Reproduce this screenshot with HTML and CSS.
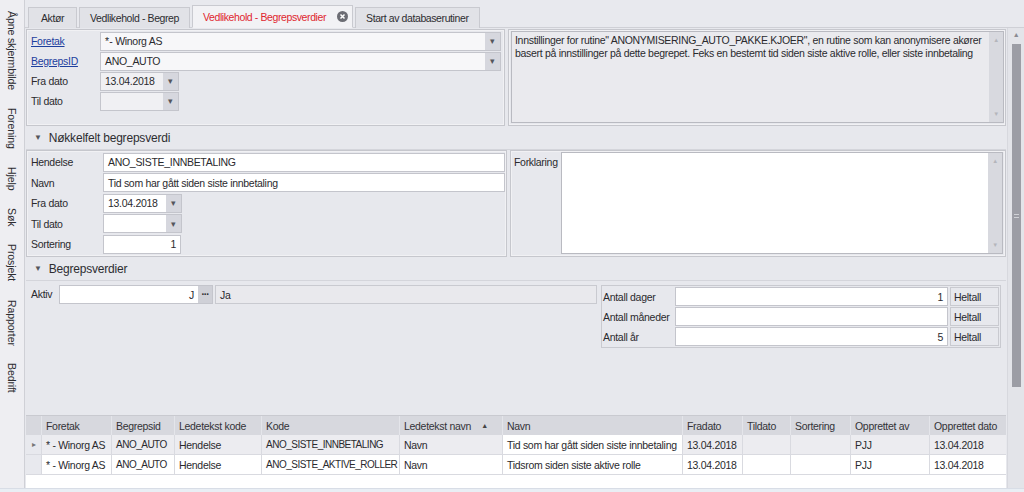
FILE: index.html
```html
<!DOCTYPE html>
<html lang="no">
<head>
<meta charset="utf-8">
<title>Vedlikehold - Begrepsverdier</title>
<link rel="stylesheet" href="styles.css">
</head>
<body>
<div class="app">
  <nav class="sidebar">
    <span class="side-item">Åpne skjermbilde</span>
    <span class="side-item">Forening</span>
    <span class="side-item">Hjelp</span>
    <span class="side-item">Søk</span>
    <span class="side-item">Prosjekt</span>
    <span class="side-item">Rapporter</span>
    <span class="side-item">Bedrift</span>
  </nav>
  <div class="main">
    <div class="tabs">
      <div class="tab first">Aktør</div>
      <div class="tab">Vedlikehold - Begrep</div>
      <div class="tab active">Vedlikehold - Begrepsverdier
        <svg class="close" width="11" height="11" viewBox="0 0 11 11"><circle cx="5.5" cy="5.5" r="5.5" fill="#6c6d74"/><path d="M3.5 3.5l4 4M7.5 3.5l-4 4" stroke="#fff" stroke-width="1.5"/></svg>
      </div>
      <div class="tab">Start av databaserutiner</div>
    </div>
    <div class="workarea">
      <div class="content">
        <div class="row top-row">
          <div class="group form-left">
            <div class="frow"><a class="lbl link" href="#">Foretak</a><div class="input combo w400"><span class="val">*&#8202;- Winorg AS</span><span class="drop">▾</span></div></div>
            <div class="frow"><a class="lbl link" href="#">BegrepsID</a><div class="input combo w400"><span class="val">ANO_AUTO</span><span class="drop">▾</span></div></div>
            <div class="frow"><span class="lbl">Fra dato</span><div class="input combo date gray"><span class="val">13.04.2018</span><span class="drop">▾</span></div></div>
            <div class="frow"><span class="lbl">Til dato</span><div class="input combo date gray"><span class="val"></span><span class="drop">▾</span></div></div>
          </div>
          <div class="group desc">
            <div class="memo gray">
              <div class="memo-text">Innstillinger for rutine" ANONYMISERING_AUTO_PAKKE.KJOER", en rutine som kan anonymisere akører basert på innstillinger på dette begrepet. Feks en bestemt tid siden siste aktive rolle, eller siste innbetaling</div>
              <div class="memo-scroll"><span>▲</span><span>▼</span></div>
            </div>
          </div>
        </div>

        <div class="section"><span class="tri">▼</span>Nøkkelfelt begrepsverdi</div>

        <div class="row key-row">
          <div class="group form-key">
            <div class="krow"><span class="lbl">Hendelse</span><div class="input wide"><span class="val">ANO_SISTE_INNBETALING</span></div></div>
            <div class="krow"><span class="lbl">Navn</span><div class="input wide"><span class="val">Tid som har gått siden siste innbetaling</span></div></div>
            <div class="krow"><span class="lbl">Fra dato</span><div class="input combo date"><span class="val">13.04.2018</span><span class="drop">▾</span></div></div>
            <div class="krow"><span class="lbl">Til dato</span><div class="input combo date"><span class="val"></span><span class="drop">▾</span></div></div>
            <div class="krow"><span class="lbl">Sortering</span><div class="input num"><span class="val">1</span></div></div>
          </div>
          <div class="group forklaring">
            <span class="lbl-top">Forklaring</span>
            <div class="memo white">
              <div class="memo-text"></div>
              <div class="memo-scroll"><span>▲</span><span>▼</span></div>
            </div>
          </div>
        </div>

        <div class="section"><span class="tri">▼</span>Begrepsverdier</div>

        <div class="row values-row">
          <div class="aktiv">
            <span class="lbl small">Aktiv</span>
            <div class="input aktiv-in"><span class="val right">J</span><span class="dots">···</span></div>
            <div class="input ro"><span class="val">Ja</span></div>
          </div>
          <div class="antall">
            <div class="arow"><span class="albl">Antall dager</span><div class="input num flex"><span class="val">1</span></div><span class="type">Heltall</span></div>
            <div class="arow"><span class="albl">Antall måneder</span><div class="input num flex"><span class="val"></span></div><span class="type">Heltall</span></div>
            <div class="arow"><span class="albl">Antall år</span><div class="input num flex"><span class="val">5</span></div><span class="type">Heltall</span></div>
          </div>
        </div>

        <div class="spacer"></div>

        <div class="grid">
          <div class="grow head">
            <span class="c ind"></span><span class="c c1">Foretak</span><span class="c c2">Begrepsid</span><span class="c c3">Ledetekst kode</span><span class="c c4">Kode</span><span class="c c5">Ledetekst navn<span class="sort">▲</span></span><span class="c c6">Navn</span><span class="c c7">Fradato</span><span class="c c8">Tildato</span><span class="c c9">Sortering</span><span class="c c10">Opprettet av</span><span class="c c11">Opprettet dato</span>
          </div>
          <div class="grow sel">
            <span class="c ind"><span class="ptr">▸</span></span><span class="c c1">* - Winorg AS</span><span class="c c2 caps">ANO_AUTO</span><span class="c c3">Hendelse</span><span class="c c4 caps">ANO_SISTE_INNBETALING</span><span class="c c5">Navn</span><span class="c c6 focus">Tid som har gått siden siste innbetaling</span><span class="c c7">13.04.2018</span><span class="c c8"></span><span class="c c9"></span><span class="c c10">PJJ</span><span class="c c11">13.04.2018</span>
          </div>
          <div class="grow">
            <span class="c ind"></span><span class="c c1">* - Winorg AS</span><span class="c c2 caps">ANO_AUTO</span><span class="c c3">Hendelse</span><span class="c c4 caps">ANO_SISTE_AKTIVE_ROLLER</span><span class="c c5">Navn</span><span class="c c6">Tidsrom siden siste aktive rolle</span><span class="c c7">13.04.2018</span><span class="c c8"></span><span class="c c9"></span><span class="c c10">PJJ</span><span class="c c11">13.04.2018</span>
          </div>
        </div>
      </div>
      <div class="vscroll">
        <span class="arrow">▲</span>
        <div class="thumb"><span class="grip"></span></div>
      </div>
    </div>
  </div>
</div>
<div class="statusbar"></div>
</body>
</html>
```
FILE: styles.css
```css
* { box-sizing: border-box; }
html, body { margin: 0; padding: 0; }
body {
  width: 1024px;
  height: 492px;
  overflow: hidden;
  background: #e7e8ed;
  font-family: "Liberation Sans", Arial, sans-serif;
  font-size: 10.5px;
  letter-spacing: -0.3px;
  color: #2a2a2e;
}
.app { display: flex; height: 488px; }
.statusbar { height: 4px; background: #e9eef4; border-top: 1px solid #d8dde6; }

.sidebar {
  width: 25px;
  background: #eeeef2;
  border-right: 1px solid #cfd0d6;
  display: flex;
  flex-direction: column;
  align-items: center;
  padding-top: 11px;
  gap: 18px;
}
.side-item {
  writing-mode: vertical-rl;
  font-size: 10.5px;
  color: #2c2c30;
  letter-spacing: -0.1px;
}

.main { flex: 1; display: flex; flex-direction: column; min-width: 0; }

.tabs {
  height: 28px;
  display: flex;
  align-items: flex-end;
  gap: 2px;
  padding-left: 3px;
  background: #e8e9ee;
  border-bottom: 1px solid #cfd0d6;
}
.tab {
  height: 21px;
  padding: 0 10px;
  display: flex;
  align-items: center;
  background: #e1e2e7;
  border: 1px solid #c9cad0;
  border-bottom: none;
  color: #2d2d31;
  margin-bottom: -1px;
  letter-spacing: -0.4px;
}
.tab.first { padding: 0 12px; }
.tab.active {
  background: #f2f2f5;
  color: #e0262f;
  height: 23px;
  padding-right: 4px;
  padding-left: 10px;
  border-bottom: 1px solid #f2f2f5;
}
.close { margin-left: 11px; }

.workarea { flex: 1; display: flex; min-height: 0; }
.content {
  flex: 1;
  display: flex;
  flex-direction: column;
  padding: 1px 1px 0 1px;
  min-width: 0;
}

.row { display: flex; }
.group {
  border: 1px solid #c6c7cd;
  box-shadow: inset 0 0 0 1px #f1f1f4;
}

.top-row { height: 97px; gap: 3px; }
.form-left { width: 479px; padding: 1px 3px 0 4px; }
.frow { display: flex; align-items: center; height: 20px; }
.frow .lbl { width: 69px; }
.lbl { color: #2a2a2e; }
.link { color: #1d3f9e; text-decoration: underline; }

.input {
  height: 19px;
  background: #fff;
  border: 1px solid #c4c5cc;
  display: flex;
  align-items: center;
}
.input.gray { background: #f0f0f3; }
.val { flex: 1; padding: 0 4px; white-space: nowrap; overflow: hidden; }
.val.right { text-align: right; }
.combo .drop {
  width: 15px;
  height: 100%;
  background: #d6d7de;
  color: #55565c;
  font-size: 9px;
  display: flex;
  align-items: center;
  justify-content: center;
}
.w400 { width: 401px; background: #f7f7f9; }
.date { width: 79px; }

.desc { flex: 1; padding: 1px 1px 2px 2px; }
.memo {
  height: 100%;
  display: flex;
  border: 1px solid #b9bac1;
}
.memo.gray { background: #eaeaee; }
.memo.white { background: #fff; }
.memo-text { flex: 1; padding: 2px 3px; line-height: 13px; }
.memo-scroll {
  width: 14px;
  background: #d8d9df;
  display: flex;
  flex-direction: column;
  justify-content: space-between;
  align-items: center;
  color: #b4b5bb;
  font-size: 6px;
  padding: 5px 0;
}

.section {
  height: 24px;
  display: flex;
  align-items: center;
  padding-left: 8px;
  font-size: 12px;
  color: #2d2d31;
  border-bottom: 1px solid #d4d5db;
  letter-spacing: -0.2px;
}
.tri { font-size: 8px; color: #55565c; margin-right: 7px; }

.key-row { height: 107px; gap: 3px; }
.form-key { width: 481px; padding: 1px 0 0 4px; }
.krow { display: flex; align-items: center; height: 20.5px; }
.krow .lbl { width: 72px; }
.wide { width: 402px; }
.num { width: 78px; }
.num .val { text-align: right; }
.forklaring { flex: 1; display: flex; padding: 1px 2px 2px 2px; }
.lbl-top { width: 48px; padding-top: 4px; padding-left: 1px; }
.forklaring .memo { flex: 1; height: auto; }

.values-row { padding-top: 4px; gap: 4px; }
.aktiv { display: flex; align-items: flex-start; width: 571px; padding-left: 5px; }
.lbl.small { width: 28px; padding-top: 3px; }
.aktiv-in { width: 154px; }
.dots {
  width: 14px;
  height: 100%;
  background: #cfd0d7;
  display: flex;
  align-items: center;
  justify-content: center;
  font-weight: bold;
  font-size: 10px;
  letter-spacing: -1px;
}
.ro { flex: 1; margin-left: 2px; background: #e9e9ed; border-color: #c9cad0; }

.antall {
  width: 400px;
  border: 1px solid #c9cad0;
  padding: 1px;
  display: flex;
  flex-direction: column;
  gap: 1px;
}
.arow { display: flex; align-items: center; height: 19px; gap: 2px; }
.albl { width: 70px; white-space: nowrap; }
.flex { flex: 1; width: auto; }
.type {
  width: 49px;
  height: 19px;
  border: 1px solid #c9cad0;
  padding-left: 3px;
  display: flex;
  align-items: center;
}

.spacer { flex: 1; }

.grid {
  height: 73px;
  background: #fff;
  border-top: 1px solid #c9cad0;
}
.grow { display: flex; height: 20px; border-bottom: 1px solid #d9dae0; }
.grow.head { height: 19px; background: #d7d8de; border-bottom: none; color: #333338; }
.grow.sel { background: #ececf0; }
.c {
  display: flex;
  align-items: center;
  padding-left: 4px;
  border-right: 1px solid #d9dae0;
  white-space: nowrap;
  overflow: hidden;
  flex: none;
}
.c.caps { font-size: 10px; letter-spacing: -0.5px; }
.head .c { border-right-color: #e4e5ea; }
.ind { width: 16px; background: #e8e9ee; padding: 0; justify-content: center; }
.head .ind { background: #d7d8de; }
.ptr { font-size: 8px; color: #777; }
.c1 { width: 70px; }
.c2 { width: 63px; }
.c3 { width: 87px; }
.c4 { width: 138px; }
.c5 { width: 103px; }
.c6 { width: 180px; }
.c7 { width: 60px; }
.c8 { width: 48px; }
.c9 { width: 60px; }
.c10 { width: 79px; }
.c11 { width: 73px; border-right: none; }
.sort { font-size: 7px; margin-left: auto; margin-right: 14px; color: #444; }
.focus { background: #fff; }

.vscroll {
  width: 17px;
  background: #e3e4e9;
  display: flex;
  flex-direction: column;
  align-items: center;
  padding-top: 3px;
  border-left: 1px solid #d7d8de;
}
.arrow { font-size: 7px; color: #8a8b92; height: 10px; }
.thumb {
  margin-top: 3px;
  width: 9px;
  height: 343px;
  background: #9c9da5;
  display: flex;
  align-items: center;
  justify-content: center;
}
.grip { width: 5px; height: 4px; border-top: 1px solid #d0d1d6; border-bottom: 1px solid #d0d1d6; }
```
